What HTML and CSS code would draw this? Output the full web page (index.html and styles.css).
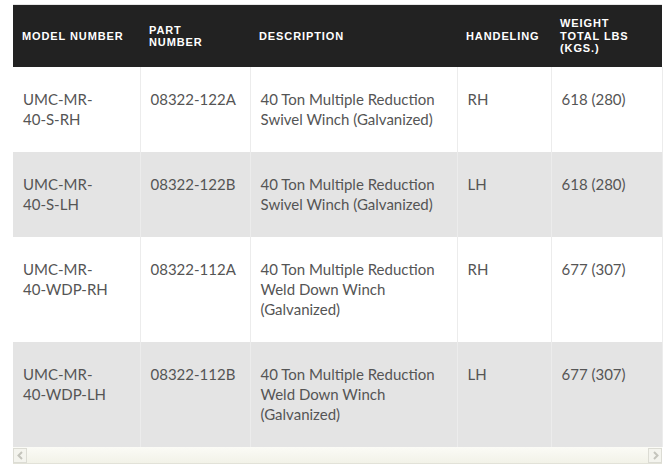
FILE: index.html
```html
<!DOCTYPE html>
<html>
<head>
<meta charset="utf-8">
<link rel="stylesheet" href="styles.css">
</head>
<body>
<div class="wrap">
  <table class="specs">
    <colgroup>
      <col class="c1"><col class="c2"><col class="c3"><col class="c4"><col class="c5">
    </colgroup>
    <thead>
      <tr>
        <th>Model Number</th>
        <th>Part<br>Number</th>
        <th>Description</th>
        <th>Handeling</th>
        <th>Weight<br>Total LBS<br>(KGS.)</th>
      </tr>
    </thead>
    <tbody>
      <tr>
        <td>UMC-MR-<br>40-S-RH</td>
        <td>08322-122A</td>
        <td>40 Ton Multiple Reduction Swivel Winch (Galvanized)</td>
        <td>RH</td>
        <td>618 (280)</td>
      </tr>
      <tr class="alt">
        <td>UMC-MR-<br>40-S-LH</td>
        <td>08322-122B</td>
        <td>40 Ton Multiple Reduction Swivel Winch (Galvanized)</td>
        <td>LH</td>
        <td>618 (280)</td>
      </tr>
      <tr>
        <td>UMC-MR-<br>40-WDP-RH</td>
        <td>08322-112A</td>
        <td>40 Ton Multiple Reduction Weld Down Winch (Galvanized)</td>
        <td>RH</td>
        <td>677 (307)</td>
      </tr>
      <tr class="alt">
        <td>UMC-MR-<br>40-WDP-LH</td>
        <td>08322-112B</td>
        <td>40 Ton Multiple Reduction Weld Down Winch (Galvanized)</td>
        <td>LH</td>
        <td>677 (307)</td>
      </tr>
    </tbody>
  </table>
  <div class="hscroll">
    <div class="btn"><svg width="9" height="9" viewBox="0 0 9 9"><path d="M6 1 L2.5 4.5 L6 8" fill="none" stroke="#c4c4bc" stroke-width="2"/></svg></div>
    <div class="track"></div>
    <div class="btn"><svg width="9" height="9" viewBox="0 0 9 9"><path d="M3 1 L6.5 4.5 L3 8" fill="none" stroke="#c4c4bc" stroke-width="2"/></svg></div>
  </div>
</div>
</body>
</html>
```

FILE: styles.css
```css
html, body {
  margin: 0;
  padding: 0;
  background: #fff;
}

.wrap {
  margin: 4px 0 0 13px;
  width: 649px;
  border-top: 1px solid #e6e6e6;
}

.specs {
  border-collapse: collapse;
  table-layout: fixed;
  width: 649px;
}

.c1 { width: 127px; }
.c2 { width: 110px; }
.c3 { width: 207px; }
.c4 { width: 94px; }
.c5 { width: 111px; }

.specs th {
  background: #222222;
  color: #fff;
  font-family: "Liberation Sans", Arial, sans-serif;
  font-weight: bold;
  font-size: 11px;
  line-height: 12.5px;
  letter-spacing: 0.9px;
  text-transform: uppercase;
  text-align: left;
  vertical-align: middle;
  height: 62px;
  padding: 0 9px;
  box-sizing: border-box;
}

.specs td {
  font-family: Lato, "Liberation Sans", sans-serif;
  font-size: 15px;
  line-height: 20px;
  color: #555;
  vertical-align: top;
  padding: 22px 10px 23px;
  border-left: 1px solid #ececec;
  border-right: 1px solid #ececec;
  background: #fff;
}

.specs td:first-child { border-left: none; }

.specs tr.alt td { background: #e4e4e4; }

.hscroll {
  display: flex;
  height: 16px;
  background: linear-gradient(#fbfbf6, #f2f2e8);
  border-bottom: 1px solid #e2e2d8;
}

.hscroll .track { flex: 1; }

.hscroll .btn {
  width: 14px;
  height: 15px;
  border: 1px solid #dcdcd4;
  background: #f4f4ee;
  display: flex;
  align-items: center;
  justify-content: center;
  box-sizing: border-box;
  margin-top: 1px;
}
```
